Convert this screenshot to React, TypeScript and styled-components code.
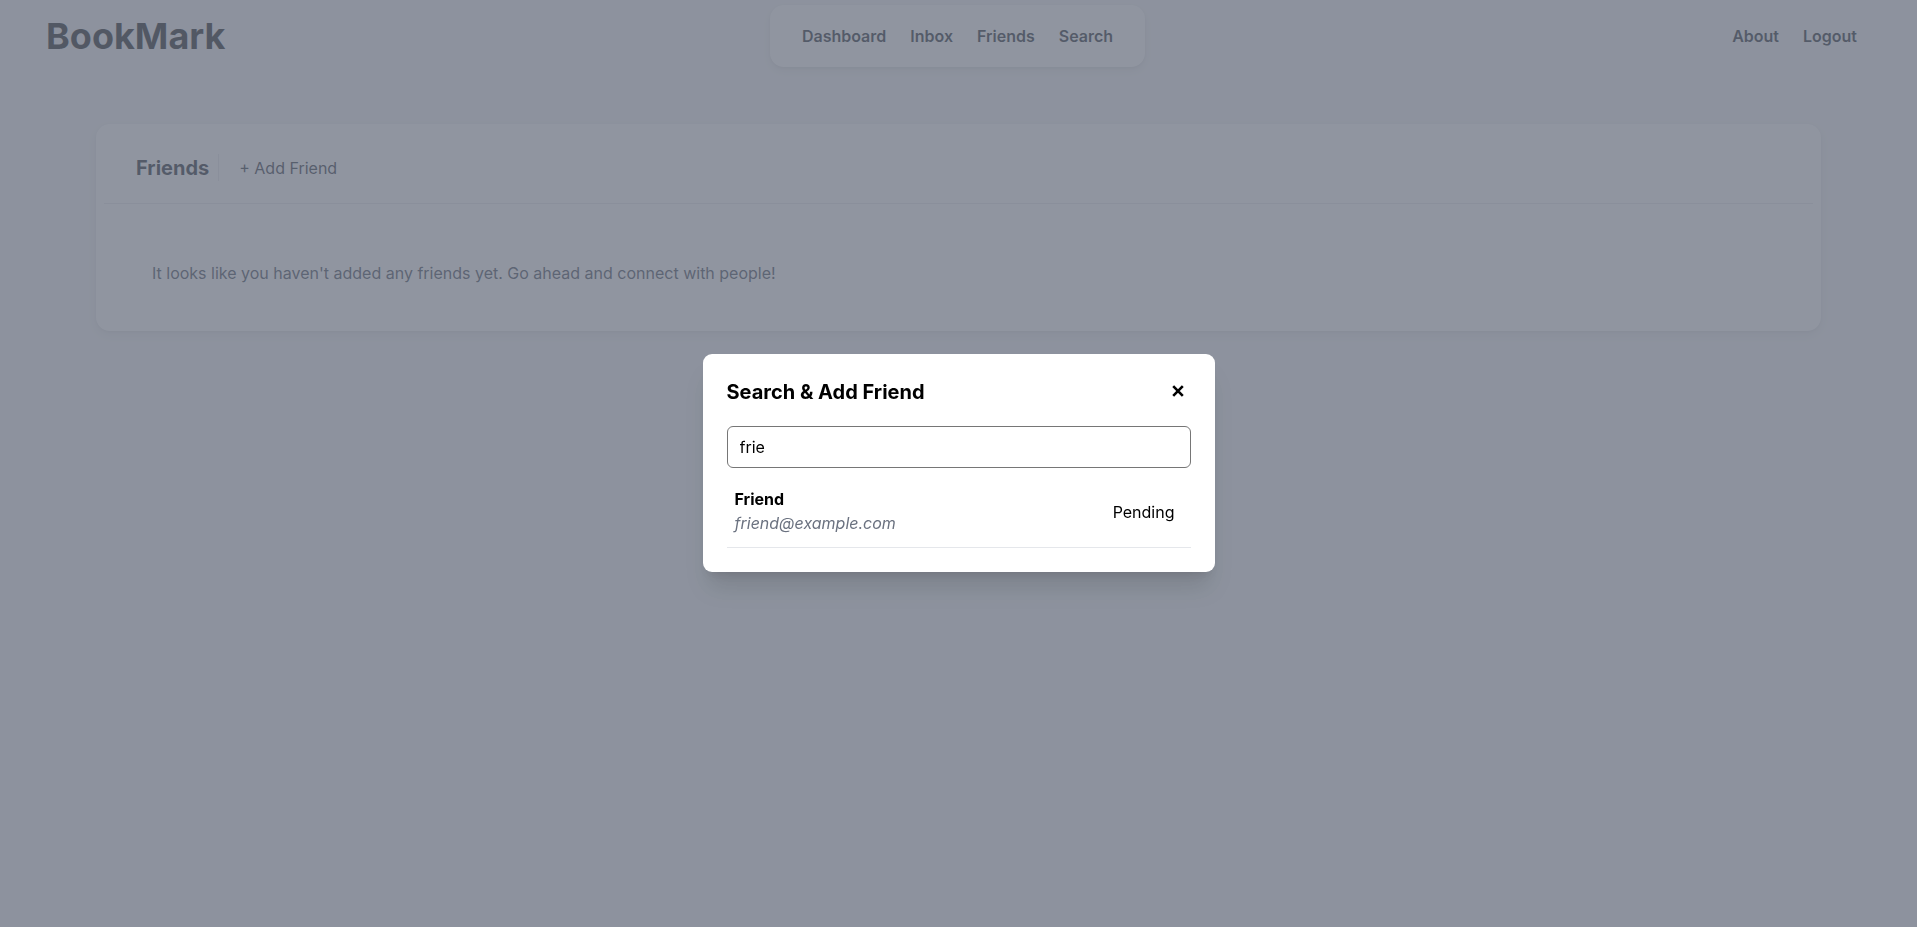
import React from "react";
import styled, { createGlobalStyle } from "styled-components";

const GlobalStyle = createGlobalStyle`
  * { box-sizing: border-box; }
  html, body { margin: 0; padding: 0; }
  body {
    background: #f3f4f6;
    font-family: Inter, "Noto Sans", "Liberation Sans", sans-serif;
    color: #111827;
    min-height: 100vh;
  }
`;

const Page = styled.div`
  min-height: 927px;
  display: flex;
  flex-direction: column;
`;

const Header = styled.header`
  height: 72px;
  display: grid;
  grid-template-columns: 1fr auto 1fr;
  align-items: center;
  padding: 0 48px 0 46px;
`;

const Brand = styled.div`
  font-size: 36px;
  font-weight: 700;
  line-height: 40px;
  color: #0b0d12;
`;

const CenterNav = styled.nav`
  height: 62px;
  display: flex;
  align-items: center;
  padding: 0 20px;
  background: #ffffff;
  border-radius: 14px;
  box-shadow: 0 4px 10px rgba(0, 0, 0, 0.08), 0 1px 3px rgba(0, 0, 0, 0.06);
`;

const SideNav = styled.nav`
  display: flex;
  justify-content: flex-end;
  align-items: center;
`;

const NavLink = styled.a`
  padding: 0 12px;
  font-size: 16px;
  font-weight: 600;
  line-height: 24px;
  color: #111827;
  text-decoration: none;
  cursor: pointer;
`;

const Main = styled.main`
  padding: 52px 96px 0;
`;

const Card = styled.section`
  background: #ffffff;
  border-radius: 14px;
  padding: 8px;
  box-shadow: 0 4px 12px rgba(0, 0, 0, 0.08), 0 1px 3px rgba(0, 0, 0, 0.05);
`;

const CardHeader = styled.div`
  display: flex;
  align-items: center;
  height: 72px;
  padding: 0 32px;
  border-bottom: 1px solid #e5e7eb;
`;

const CardTitle = styled.h2`
  margin: 0;
  padding-right: 9px;
  font-size: 20px;
  font-weight: 700;
  line-height: 28px;
  color: #111827;
`;

const VDivider = styled.span`
  width: 1px;
  height: 27px;
  background: #e5e7eb;
`;

const AddButton = styled.button`
  margin-left: 4px;
  padding: 4px 16px;
  border: none;
  background: transparent;
  font-family: inherit;
  font-size: 16px;
  line-height: 24px;
  color: #1f2937;
  cursor: pointer;
`;

const EmptyText = styled.p`
  margin: 0;
  padding: 57px 48px 38px;
  font-size: 16px;
  line-height: 24px;
  color: #374151;
`;

const Overlay = styled.div`
  position: fixed;
  inset: 0;
  background: rgba(107, 114, 128, 0.75);
  display: flex;
  justify-content: center;
  align-items: flex-start;
  padding-top: 354px;
`;

const Modal = styled.div`
  width: 512px;
  background: #ffffff;
  border-radius: 9px;
  padding: 24px;
  box-shadow: 0 20px 25px -5px rgba(0, 0, 0, 0.12), 0 8px 10px -6px rgba(0, 0, 0, 0.1);
`;

const ModalHead = styled.div`
  display: flex;
  justify-content: space-between;
  align-items: center;
  margin-bottom: 20px;
`;

const ModalTitle = styled.h3`
  margin: 0;
  font-size: 20px;
  font-weight: 700;
  line-height: 28px;
  color: #000000;
`;

const CloseButton = styled.button`
  display: flex;
  align-items: center;
  justify-content: center;
  padding: 4px;
  margin: -2px 3px 0 0;
  border: none;
  background: transparent;
  cursor: pointer;
`;

const SearchInput = styled.input`
  display: block;
  width: 100%;
  height: 42px;
  padding: 0 12px;
  margin-bottom: 8px;
  border: 1px solid #767676;
  border-radius: 6px;
  font-family: inherit;
  font-size: 16px;
  color: #000000;
  outline: none;
`;

const ResultRow = styled.div`
  display: flex;
  justify-content: space-between;
  align-items: center;
  padding: 12px 16px 12px 8px;
  border-bottom: 1px solid #e5e7eb;
`;

const ResultInfo = styled.div`
  display: flex;
  flex-direction: column;
`;

const ResultName = styled.span`
  font-size: 16px;
  font-weight: 700;
  line-height: 23px;
  color: #000000;
`;

const ResultEmail = styled.span`
  font-size: 16px;
  font-style: italic;
  line-height: 24px;
  color: #6b7280;
`;

const Status = styled.span`
  font-size: 16px;
  line-height: 24px;
  color: #000000;
`;

export default function App() {
  return (
    <>
      <GlobalStyle />
      <Page>
        <Header>
          <Brand>BookMark</Brand>
          <CenterNav>
            <NavLink>Dashboard</NavLink>
            <NavLink>Inbox</NavLink>
            <NavLink>Friends</NavLink>
            <NavLink>Search</NavLink>
          </CenterNav>
          <SideNav>
            <NavLink>About</NavLink>
            <NavLink>Logout</NavLink>
          </SideNav>
        </Header>
        <Main>
          <Card>
            <CardHeader>
              <CardTitle>Friends</CardTitle>
              <VDivider />
              <AddButton>+ Add Friend</AddButton>
            </CardHeader>
            <EmptyText>
              It looks like you haven't added any friends yet. Go ahead and connect with people!
            </EmptyText>
          </Card>
        </Main>
      </Page>
      <Overlay>
        <Modal>
          <ModalHead>
            <ModalTitle>Search &amp; Add Friend</ModalTitle>
            <CloseButton aria-label="Close">
              <svg width="12" height="12" viewBox="0 0 12 12">
                <path d="M1.2 1.2 L10.8 10.8 M10.8 1.2 L1.2 10.8" stroke="#000" strokeWidth="2.6" strokeLinecap="butt" />
              </svg>
            </CloseButton>
          </ModalHead>
          <SearchInput defaultValue="frie" />
          <ResultRow>
            <ResultInfo>
              <ResultName>Friend</ResultName>
              <ResultEmail>friend@example.com</ResultEmail>
            </ResultInfo>
            <Status>Pending</Status>
          </ResultRow>
        </Modal>
      </Overlay>
    </>
  );
}
